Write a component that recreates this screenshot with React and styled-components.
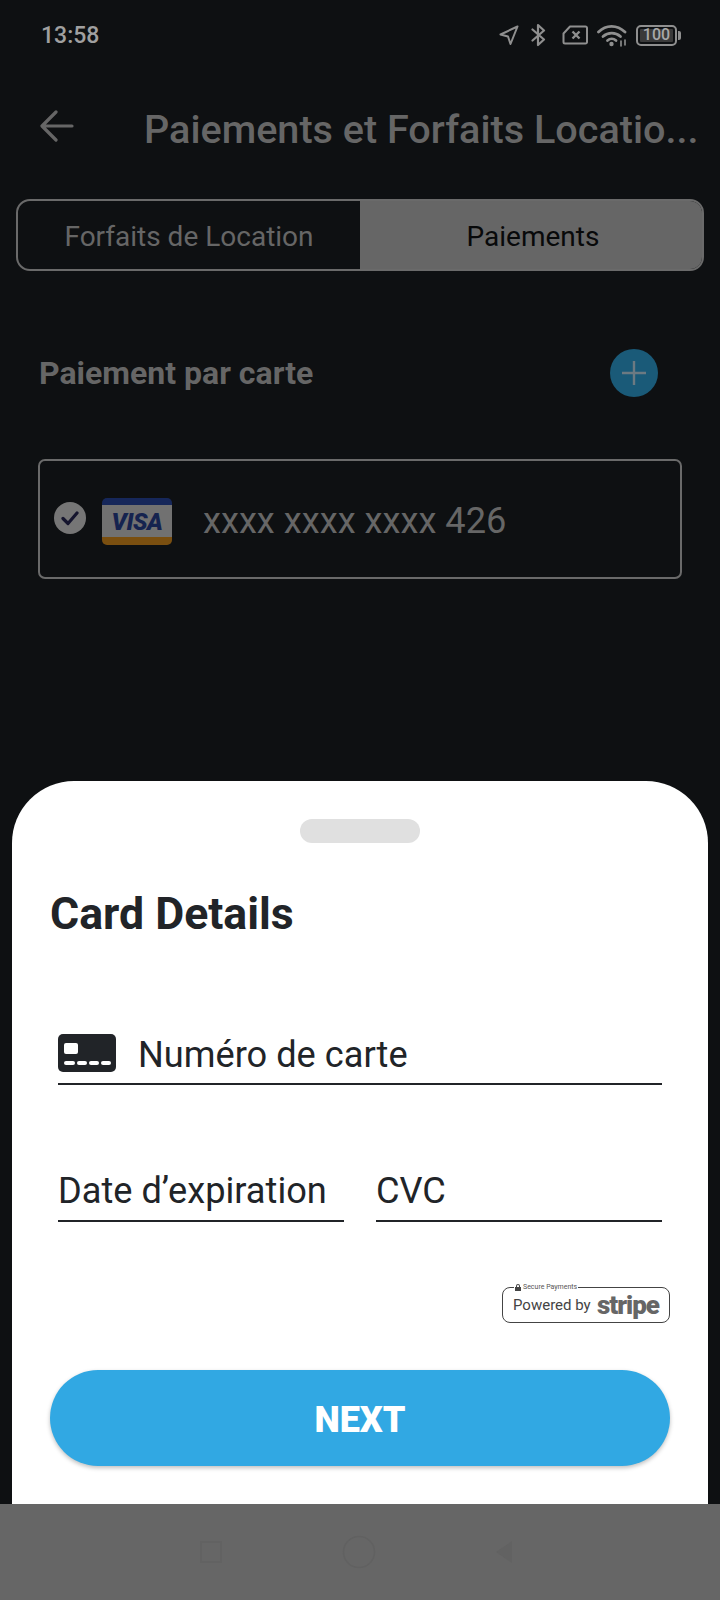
import React from "react";
import styled, { createGlobalStyle } from "styled-components";

export default function App() {
  return (
    <>
      <GlobalStyle />
      <Screen>
        <StatusBar>
          <StatusTime>13:58</StatusTime>
          <StatusIcons>
            <svg width="20" height="20" viewBox="0 0 20 20" fill="none" stroke="#8f8f8f" strokeWidth="2" strokeLinejoin="round">
              <path d="M18.5 1.5 1.5 9.5l7.5 2 2.5 7.500z" />
            </svg>
            <BluetoothIcon width="15" height="24" viewBox="0 0 15 24" fill="none" stroke="#8f8f8f" strokeWidth="2.200" strokeLinejoin="round" strokeLinecap="round">
              <path d="M1.5 6.500 13 16.500 7 22V2l6 5.500-11.500 10" />
            </BluetoothIcon>
            <SimIcon width="26" height="20" viewBox="0 0 26 20" fill="none" stroke="#8f8f8f" strokeWidth="2" strokeLinejoin="round">
              <path d="M8 1.500h15.500a1.500 1.500 0 0 1 1.500 1.500v14a1.500 1.500 0 0 1-1.500 1.500H3A1.500 1.500 0 0 1 1.500 17V8.500z" />
              <path d="m10.500 6.500 7 7m0-7-7 7" strokeWidth="2.400" />
            </SimIcon>
            <WifiIcon width="30" height="23" viewBox="0 0 30 23" fill="none" stroke="#8f8f8f" strokeWidth="2.800" strokeLinecap="round">
              <path d="M1.500 8C9 .5 20 .5 28 8" />
              <path d="M6 12.500c5-4.500 12.500-4.500 17.500 0" />
              <path d="M10.500 16.500c2.500-2.200 6-2.200 8.500 0" />
              <circle cx="14.500" cy="20" r="2.200" fill="#8f8f8f" stroke="none" />
              <path d="M24 17v5M28 16v5" strokeWidth="1.600" />
            </WifiIcon>
            <Battery>
              <BatteryBody>
                <BatteryLevel>100</BatteryLevel>
              </BatteryBody>
              <BatteryCap />
            </Battery>
          </StatusIcons>
        </StatusBar>

        <Header>
          <BackIcon width="34" height="32" viewBox="0 0 34 32" fill="none" stroke="#666" strokeWidth="3.200" strokeLinecap="round" strokeLinejoin="round">
            <path d="M32 16H3M16 2 2 16l14 14" />
          </BackIcon>
          <Title>Paiements et Forfaits Locatio...</Title>
        </Header>

        <Tabs>
          <Tab>Forfaits de Location</Tab>
          <Tab $active>Paiements</Tab>
        </Tabs>

        <SectionRow>
          <SectionTitle>Paiement par carte</SectionTitle>
          <AddButton>
            <svg width="24" height="24" viewBox="0 0 24 24" stroke="#6c7a82" strokeWidth="2.400">
              <path d="M12 0v24M0 12h24" />
            </svg>
          </AddButton>
        </SectionRow>

        <SavedCard>
          <CheckBadge>
            <svg width="18" height="16" viewBox="0 0 18 16" fill="none" stroke="#15152e" strokeWidth="3.200" strokeLinecap="round" strokeLinejoin="round">
              <path d="m2 8.500 5 5L16 3" />
            </svg>
          </CheckBadge>
          <VisaCard>
            <VisaText>VISA</VisaText>
          </VisaCard>
          <CardNumber>xxxx xxxx xxxx 426</CardNumber>
        </SavedCard>

        <Sheet>
          <Handle />
          <SheetTitle>Card Details</SheetTitle>
          <NumberField>
            <CardIcon width="58" height="38" viewBox="0 0 58 38">
              <rect width="58" height="38" rx="5" fill="#212428" />
              <rect x="6" y="9" width="14" height="11" rx="2" fill="#fff" />
              <rect x="6" y="27" width="11" height="4" rx="2" fill="#fff" />
              <rect x="19" y="27" width="10" height="4" rx="2" fill="#fff" />
              <rect x="31" y="27" width="10" height="4" rx="2" fill="#fff" />
              <rect x="43" y="27" width="10" height="4" rx="2" fill="#fff" />
            </CardIcon>
            <NumberLabel>Numéro de carte</NumberLabel>
          </NumberField>
          <FieldRow>
            <HalfField>
              <FieldLabel>Date d’expiration</FieldLabel>
            </HalfField>
            <HalfField>
              <FieldLabel>CVC</FieldLabel>
            </HalfField>
          </FieldRow>
          <StripeRow>
            <StripeBadge>
              <SecureLegend>
                <svg width="6" height="7" viewBox="0 0 6 7" fill="#444">
                  <path d="M0 3h6v4H0zM1 3V2a2 2 0 0 1 4 0v1H4V2a1 1 0 0 0-2 0v1z" />
                </svg>
                Secure Payments
              </SecureLegend>
              <PoweredBy>Powered by</PoweredBy>
              <StripeWord>stripe</StripeWord>
            </StripeBadge>
          </StripeRow>
          <NextButton>NEXT</NextButton>
        </Sheet>

        <NavBar>
          <svg width="22" height="22" viewBox="0 0 22 22" fill="none" stroke="#626262" strokeWidth="2">
            <rect x="1" y="1" width="20" height="20" />
          </svg>
          <svg width="34" height="34" viewBox="0 0 34 34" fill="none" stroke="#616161" strokeWidth="1.500">
            <circle cx="17" cy="17" r="15.500" />
          </svg>
          <svg width="18" height="24" viewBox="0 0 18 24" fill="#626262">
            <path d="M17 1v22L1 12z" />
          </svg>
        </NavBar>
      </Screen>
    </>
  );
}

const GlobalStyle = createGlobalStyle`
  html, body {
    margin: 0;
    padding: 0;
    background: #0e1012;
  }
  * {
    box-sizing: border-box;
  }
`;
const Screen = styled.div`
  width: 720px;
  height: 1600px;
  display: flex;
  flex-direction: column;
  overflow: hidden;
  background: #0e1012;
  font-family: "Roboto", sans-serif;
`;
const StatusBar = styled.div`
  height: 70px;
  padding: 0 39px 0 41px;
  display: flex;
  align-items: center;
  justify-content: space-between;
`;
const StatusTime = styled.div`
  color: #a0a0a0;
  font-size: 23px;
  font-weight: 500;
`;
const StatusIcons = styled.div`
  display: flex;
  align-items: center;
  gap: 11px;
`;
const BluetoothIcon = styled.svg`
  margin-left: 1px;
`;
const SimIcon = styled.svg`
  margin-left: 5px;
`;
const WifiIcon = styled.svg`
  margin-left: -2px;
`;
const Battery = styled.div`
  margin-left: -2px;
  display: flex;
  align-items: center;
  gap: 1px;
`;
const BatteryBody = styled.div`
  width: 41px;
  height: 21px;
  border: 2px solid #8f8f8f;
  border-radius: 5px;
  padding: 2px;
  display: flex;
  align-items: center;
  justify-content: center;
  background: #3a3a3a;
  background-clip: content-box;
`;
const BatteryLevel = styled.span`
  color: #a8a8a8;
  font-size: 16px;
  font-weight: 500;
  line-height: 14px;
`;
const BatteryCap = styled.div`
  width: 3px;
  height: 9px;
  border-radius: 0 2px 2px 0;
  background: #8f8f8f;
`;
const Header = styled.div`
  height: 129px;
  padding: 37px 0 0 40px;
  display: flex;
  align-items: flex-start;
`;
const BackIcon = styled.svg`
  flex: none;
  margin-top: 3px;
`;
const Title = styled.div`
  margin-left: 70px;
  color: #666;
  font-size: 39.6px;
  font-weight: 500;
  line-height: 46px;
  white-space: nowrap;
`;
const Tabs = styled.div`
  margin: 0 16px;
  height: 72px;
  display: flex;
  border: 2px solid #6a6a6a;
  border-radius: 14px;
  overflow: hidden;
`;
const Tab = styled.div`
  flex: 0 0 50%;
  display: flex;
  align-items: center;
  justify-content: center;
  padding: ${(p) => (p.$active ? "2px 0 0 4px" : "2px 0 0")};
  font-size: 28px;
  color: ${(p) => (p.$active ? "#08090a" : "#666")};
  background: ${(p) => (p.$active ? "#666" : "transparent")};
`;
const SectionRow = styled.div`
  margin-top: 78px;
  padding: 0 62px 0 39px;
  height: 48px;
  display: flex;
  align-items: center;
  justify-content: space-between;
`;
const SectionTitle = styled.div`
  color: #666;
  font-size: 32px;
  font-weight: 700;
`;
const AddButton = styled.div`
  width: 48px;
  height: 48px;
  border-radius: 50%;
  background: #1a5a78;
  display: flex;
  align-items: center;
  justify-content: center;
`;
const SavedCard = styled.div`
  margin: 62px 38px 0 38px;
  height: 120px;
  padding: 0 0 0 14px;
  display: flex;
  align-items: center;
  border: 2px solid #6a6a6a;
  border-radius: 7px;
`;
const CheckBadge = styled.div`
  width: 32px;
  height: 32px;
  margin-top: -2px;
  border-radius: 50%;
  background: #767676;
  display: flex;
  align-items: center;
  justify-content: center;
`;
const VisaCard = styled.div`
  width: 70px;
  height: 47px;
  margin: 4px 0 0 16px;
  border-radius: 5px;
  overflow: hidden;
  display: flex;
  align-items: center;
  justify-content: center;
  background: linear-gradient(
    #16275a 0,
    #16275a 7px,
    #717171 7px,
    #717171 39px,
    #7a4f10 39px,
    #7a4f10 100%
  );
`;
const VisaText = styled.span`
  margin-top: 2px;
  color: #15234f;
  font-size: 24px;
  font-weight: 900;
  font-style: italic;
  letter-spacing: -0.5px;
`;
const CardNumber = styled.div`
  margin: 2px 0 0 31px;
  color: #666;
  font-size: 36.2px;
  white-space: nowrap;
`;
const Sheet = styled.div`
  margin: auto 12px 0;
  height: 723px;
  padding: 38px 38px 0;
  display: flex;
  flex-direction: column;
  background: #fff;
  border-radius: 62px 62px 0 0;
`;
const Handle = styled.div`
  flex: none;
  align-self: center;
  width: 120px;
  height: 24px;
  border-radius: 12px;
  background: #e0e0e0;
`;
const SheetTitle = styled.div`
  margin-top: 46px;
  color: #212428;
  font-size: 44.6px;
  font-weight: 700;
  line-height: 50px;
`;
const FieldUnderline = styled.div`
  display: flex;
  align-items: flex-start;
  border-bottom: 2px solid #212428;
`;
const NumberField = styled(FieldUnderline)`
  margin: 95px 8px 0;
  height: 51px;
  gap: 22px;
`;
const CardIcon = styled.svg`
  flex: none;
`;
const FieldLabel = styled.div`
  color: #212428;
  font-size: 36.2px;
  line-height: 40px;
  white-space: nowrap;
`;
const NumberLabel = styled(FieldLabel)`
  margin-top: 1px;
`;
const FieldRow = styled.div`
  margin: 81px 8px 0;
  display: flex;
  gap: 32px;
`;
const HalfField = styled(FieldUnderline)`
  flex: 1;
  height: 56px;
  padding-top: 5px;
`;
const StripeRow = styled.div`
  margin-top: 65px;
  display: flex;
  justify-content: flex-end;
`;
const StripeBadge = styled.div`
  position: relative;
  width: 168px;
  height: 36px;
  padding: 0 10px;
  display: flex;
  align-items: center;
  justify-content: space-between;
  border: 1px solid #444;
  border-radius: 8px;
`;
const SecureLegend = styled.div`
  position: absolute;
  top: -5px;
  left: 11px;
  padding: 0 1px;
  display: flex;
  align-items: center;
  gap: 2px;
  background: #fff;
  color: #555;
  font-size: 7px;
  line-height: 9px;
  white-space: nowrap;
`;
const PoweredBy = styled.span`
  color: #444;
  font-size: 15px;
  font-weight: 400;
  white-space: nowrap;
`;
const StripeWord = styled.span`
  color: #666;
  font-size: 26px;
  font-weight: 900;
  letter-spacing: -1px;
  line-height: 30px;
`;
const NextButton = styled.div`
  margin-top: 47px;
  padding-top: 3px;
  height: 96px;
  flex: none;
  border-radius: 48px;
  display: flex;
  align-items: center;
  justify-content: center;
  background: #31a8e3;
  box-shadow: 0 2px 4px rgba(0, 0, 0, 0.25);
  color: #fff;
  font-size: 36px;
  font-weight: 900;
`;
const NavBar = styled.div`
  flex: none;
  height: 96px;
  padding-left: 200px;
  padding-right: 207px;
  display: flex;
  align-items: center;
  justify-content: space-between;
  background: #666;
`;
